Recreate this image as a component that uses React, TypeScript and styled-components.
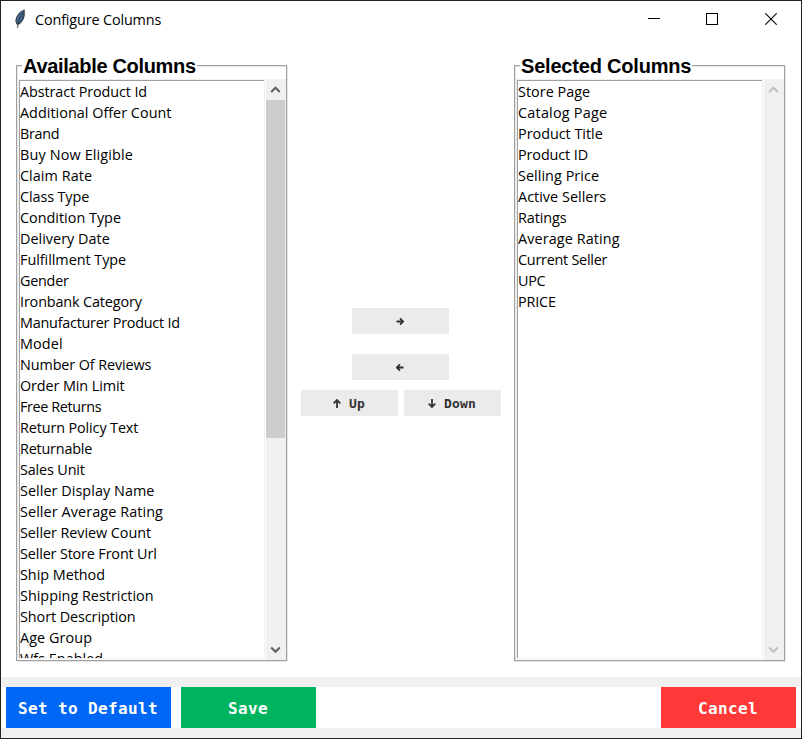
import React from "react";
import styled, { createGlobalStyle } from "styled-components";

const GlobalStyle = createGlobalStyle`
  * { box-sizing: border-box; }
  body { margin: 0; background: #fff; overflow: hidden; }
`;

const Window = styled.div`
  width: 802px;
  height: 739px;
  display: flex;
  flex-direction: column;
  background: #fff;
  border: 1px solid #222;
  color: #000;
  font-family: "Open Sans", "Noto Sans", sans-serif;
`;

const TitleBar = styled.header`
  height: 36px;
  display: flex;
  align-items: center;
  padding-left: 12px;
`;

const Title = styled.h1`
  flex: 1;
  margin: 0 0 0 7px;
  padding-top: 2px;
  font-size: 14.4px;
  font-weight: 400;
  line-height: 20px;
  letter-spacing: -0.14px;
`;

const WindowControl = styled.span<{ $width: number }>`
  width: ${(p) => p.$width}px;
  height: 36px;
  display: flex;
  align-items: center;
  justify-content: center;
`;

const Body = styled.main`
  height: 640px;
  display: grid;
  grid-template-columns: 272px 226px 272px;
  padding: 28px 0 0 15px;
`;

const Panel = styled.section`
  width: 271px;
  height: 596px;
  border: 1px solid #a0a0a0;
  box-shadow: 1px 1px #e6e6e6, inset 1px 1px #e6e6e6;
  padding: 0 0 0 1px;
`;

const Legend = styled.h2<{ $width: number }>`
  position: relative;
  width: ${(p) => p.$width}px;
  height: 24px;
  margin: -12px 0 1px 4px;
  padding-left: 1px;
  background: #fff;
  font: bold 20px/25px "Liberation Sans", Arial, sans-serif;
  letter-spacing: ${(p) => (p.$width > 173 ? -0.32 : -0.2)}px;
  white-space: nowrap;
`;

const ListArea = styled.div`
  height: 581px;
  display: flex;
`;

const ListBox = styled.ul`
  width: 247px;
  height: 580px;
  margin: 0 1px 0 0;
  padding: 1px 0 0 1px;
  list-style: none;
  overflow: hidden;
  border: 1px solid #f0f0f0;
  box-shadow: inset 1px 1px #a0a0a0;
`;

const Row = styled.li<{ $tracking: number }>`
  height: 21px;
  font-size: 14.4px;
  line-height: 21px;
  letter-spacing: ${(p) => p.$tracking}px;
  white-space: nowrap;
`;

const Scrollbar = styled.div`
  width: 20px;
  height: 581px;
  display: flex;
  flex-direction: column;
  background: #f0f0f0;
`;

const ScrollArrow = styled.span<{ $disabled?: boolean }>`
  width: 19px;
  height: 21px;
  flex: none;
  display: flex;
  align-items: center;
  justify-content: center;
  color: ${(p) => (p.$disabled ? "#bfbfbf" : "#606060")};
`;

const Track = styled.div`
  flex: 1;
`;

const Thumb = styled.div`
  width: 19px;
  height: 338px;
  background: #cdcdcd;
`;

const Controls = styled.div`
  display: flex;
  flex-direction: column;
  align-items: center;
  padding-top: 243px;
`;

const MoveButton = styled.button<{ $gap?: number }>`
  width: 97px;
  height: 26px;
  margin: 0 ${(p) => (p.$gap ? 1 : 0)}px ${(p) => p.$gap || 0}px 0;
  padding: 1px 1px 0 0;
  border: 0;
  background: #ebebeb;
  color: #333;
  font: bold 13px/25px "DejaVu Sans Mono", monospace;
  letter-spacing: 0.17px;
  display: flex;
  align-items: center;
  justify-content: center;
`;

const ArrowIcon = styled.svg<{ $spaced?: boolean }>`
  width: 8px;
  height: 9px;
  flex: none;
  margin-right: ${(p) => (p.$spaced ? 8 : 0)}px;
  margin-bottom: ${(p) => (p.$spaced ? 0 : 1)}px;
  fill: none;
  stroke: #333;
  stroke-width: 1.8;
`;

const ButtonPair = styled.div`
  display: flex;
  gap: 6px;
`;

const Footer = styled.footer`
  height: 61px;
  border: solid #f0f0f0;
  border-width: 10px 0;
  display: flex;
  gap: 10px;
  padding: 0 5px;
`;

const ActionButton = styled.button<{ $color: string; $width: number }>`
  width: ${(p) => p.$width}px;
  height: 41px;
  padding: 2px 1px 0 0;
  border: 0;
  background: ${(p) => p.$color};
  color: #fff;
  font: bold 16px/39px "DejaVu Sans Mono", monospace;
  letter-spacing: 0.37px;
  white-space: nowrap;
`;

const Spacer = styled.div`
  flex: 1;
`;

type Item = [label: string, tracking: number];

const available: Item[] = [
  ["Abstract Product Id", -0.1], ["Additional Offer Count", 0.02], ["Brand", -0.3],
  ["Buy Now Eligible", 0.15], ["Claim Rate", 0.06], ["Class Type", -0.1],
  ["Condition Type", 0], ["Delivery Date", 0.02], ["Fulfillment Type", -0.04],
  ["Gender", -0.25], ["Ironbank Category", -0.14], ["Manufacturer Product Id", -0.24],
  ["Model", 0.1], ["Number Of Reviews", -0.11], ["Order Min Limit", -0.1],
  ["Free Returns", -0.38], ["Return Policy Text", -0.12], ["Returnable", -0.2],
  ["Sales Unit", -0.15], ["Seller Display Name", 0.05], ["Seller Average Rating", 0.09],
  ["Seller Review Count", -0.06], ["Seller Store Front Url", -0.15], ["Ship Method", -0.03],
  ["Shipping Restriction", 0], ["Short Description", -0.08], ["Age Group", 0.08],
  ["Wfs Enabled", 0.03],
];

const selected: Item[] = [
  ["Store Page", 0.03], ["Catalog Page", 0.23], ["Product Title", -0.02],
  ["Product ID", -0.1], ["Selling Price", 0.05], ["Active Sellers", 0.03],
  ["Ratings", -0.1], ["Average Rating", 0.1], ["Current Seller", -0.25],
  ["UPC", -0.3], ["PRICE", -0.15],
];

const Feather = () => (
  <svg width="15" height="20" viewBox="0 0 15 20">
    <path d="M11.800 0.500C7 1.500 3 6 2.300 12L3.500 15.500H6.300C9.500 13 11.500 10 11.800 6Z" fill="#3a4654" />
    <path d="M10.300 2C6.500 4 4 8 3.600 12.800L5 14.500C9 11.500 10 8 10.300 2Z" fill="#44709f" />
    <path d="M9.800 3.500C6.500 8 5 12 4.600 18.800" stroke="#222a33" strokeWidth="0.900" fill="none" />
  </svg>
);

const arrowPaths = {
  right: "M0.500 4.500H7M4 1.300L7.200 4.500L4 7.700",
  left: "M7.500 4.500H1M4 1.300L0.800 4.500L4 7.700",
  up: "M4 9V1.500M0.700 4.300L4 1L7.300 4.300",
  down: "M4 0V7.500M0.700 4.700L4 8L7.300 4.700",
};

const Arrow = ({ to, spaced }: { to: keyof typeof arrowPaths; spaced?: boolean }) => (
  <ArrowIcon viewBox="0 0 8 9" $spaced={spaced}>
    <path d={arrowPaths[to]} />
  </ArrowIcon>
);

const Chevron = ({ down }: { down?: boolean }) => (
  <svg width="11" height="8" viewBox="0 0 11 8">
    <path d={down ? "M1.200 1.500L5.500 5.800L9.800 1.500" : "M1.200 6L5.500 1.700L9.800 6"} fill="none" stroke="currentColor" strokeWidth="2" />
  </svg>
);

type ColumnPanelProps = { title: string; legendWidth: number; items: Item[]; scrollable?: boolean };

const ColumnPanel = ({ title, legendWidth, items, scrollable }: ColumnPanelProps) => (
  <Panel>
    <Legend $width={legendWidth}>{title}</Legend>
    <ListArea>
      <ListBox>
        {items.map(([label, tracking]) => <Row key={label} $tracking={tracking}>{label}</Row>)}
      </ListBox>
      <Scrollbar>
        <ScrollArrow $disabled={!scrollable}><Chevron /></ScrollArrow>
        <Track>{scrollable && <Thumb />}</Track>
        <ScrollArrow $disabled={!scrollable}><Chevron down /></ScrollArrow>
      </Scrollbar>
    </ListArea>
  </Panel>
);

export default function App() {
  return (
    <>
      <GlobalStyle />
      <Window>
        <TitleBar>
          <Feather />
          <Title>Configure Columns</Title>
          <WindowControl $width={58}>
            <svg width="12" height="12"><path d="M0 5.500H12" stroke="#000" /></svg>
          </WindowControl>
          <WindowControl $width={58}>
            <svg width="12" height="12"><rect x="0.500" y="0.500" width="11" height="11" fill="none" stroke="#000" /></svg>
          </WindowControl>
          <WindowControl $width={60}>
            <svg width="12" height="12"><path d="M0.300 0.300L11.700 11.700M11.700 0.300L0.300 11.700" stroke="#000" strokeWidth="1.100" /></svg>
          </WindowControl>
        </TitleBar>
        <Body>
          <ColumnPanel title="Available Columns" legendWidth={175} items={available} scrollable />
          <Controls>
            <MoveButton $gap={20} aria-label="Add column"><Arrow to="right" /></MoveButton>
            <MoveButton $gap={10} aria-label="Remove column"><Arrow to="left" /></MoveButton>
            <ButtonPair>
              <MoveButton><Arrow to="up" spaced />Up</MoveButton>
              <MoveButton><Arrow to="down" spaced />Down</MoveButton>
            </ButtonPair>
          </Controls>
          <ColumnPanel title="Selected Columns" legendWidth={172} items={selected} />
        </Body>
        <Footer>
          <ActionButton $color="#0066f5" $width={165}>Set to Default</ActionButton>
          <ActionButton $color="#00b35f" $width={135}>Save</ActionButton>
          <Spacer />
          <ActionButton $color="#ff3838" $width={135}>Cancel</ActionButton>
        </Footer>
      </Window>
    </>
  );
}
